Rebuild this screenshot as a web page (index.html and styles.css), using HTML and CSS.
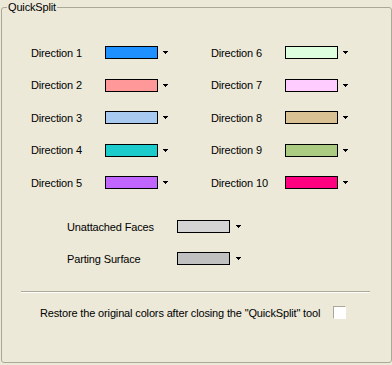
FILE: index.html
```html
<!DOCTYPE html>
<html lang="en">
<head>
    <meta charset="UTF-8">
    <title>QuickSplit</title>
    <link rel="stylesheet" href="styles.css">
</head>
<body>
    <fieldset class="panel">
        <legend>QuickSplit</legend>

        <div class="directions">
            <div class="pick"><span class="pick-label">Direction 1</span><span class="swatch" style="background:#1e90ff"></span><svg class="arrow" width="5" height="3"><rect x="0" y="0" width="5" height="1"/><rect x="1" y="1" width="3" height="1"/><rect x="2" y="2" width="1" height="1"/></svg></div>
            <div class="pick"><span class="pick-label">Direction 2</span><span class="swatch" style="background:#ff9898"></span><svg class="arrow" width="5" height="3"><rect x="0" y="0" width="5" height="1"/><rect x="1" y="1" width="3" height="1"/><rect x="2" y="2" width="1" height="1"/></svg></div>
            <div class="pick"><span class="pick-label">Direction 3</span><span class="swatch" style="background:#a8caf0"></span><svg class="arrow" width="5" height="3"><rect x="0" y="0" width="5" height="1"/><rect x="1" y="1" width="3" height="1"/><rect x="2" y="2" width="1" height="1"/></svg></div>
            <div class="pick"><span class="pick-label">Direction 4</span><span class="swatch" style="background:#1ccccc"></span><svg class="arrow" width="5" height="3"><rect x="0" y="0" width="5" height="1"/><rect x="1" y="1" width="3" height="1"/><rect x="2" y="2" width="1" height="1"/></svg></div>
            <div class="pick"><span class="pick-label">Direction 5</span><span class="swatch" style="background:#c066ff"></span><svg class="arrow" width="5" height="3"><rect x="0" y="0" width="5" height="1"/><rect x="1" y="1" width="3" height="1"/><rect x="2" y="2" width="1" height="1"/></svg></div>
            <div class="pick"><span class="pick-label">Direction 6</span><span class="swatch" style="background:#ddffdd"></span><svg class="arrow" width="5" height="3"><rect x="0" y="0" width="5" height="1"/><rect x="1" y="1" width="3" height="1"/><rect x="2" y="2" width="1" height="1"/></svg></div>
            <div class="pick"><span class="pick-label">Direction 7</span><span class="swatch" style="background:#ffccff"></span><svg class="arrow" width="5" height="3"><rect x="0" y="0" width="5" height="1"/><rect x="1" y="1" width="3" height="1"/><rect x="2" y="2" width="1" height="1"/></svg></div>
            <div class="pick"><span class="pick-label">Direction 8</span><span class="swatch" style="background:#d9c194"></span><svg class="arrow" width="5" height="3"><rect x="0" y="0" width="5" height="1"/><rect x="1" y="1" width="3" height="1"/><rect x="2" y="2" width="1" height="1"/></svg></div>
            <div class="pick"><span class="pick-label">Direction 9</span><span class="swatch" style="background:#aacb80"></span><svg class="arrow" width="5" height="3"><rect x="0" y="0" width="5" height="1"/><rect x="1" y="1" width="3" height="1"/><rect x="2" y="2" width="1" height="1"/></svg></div>
            <div class="pick"><span class="pick-label">Direction 10</span><span class="swatch" style="background:#ff0080"></span><svg class="arrow" width="5" height="3"><rect x="0" y="0" width="5" height="1"/><rect x="1" y="1" width="3" height="1"/><rect x="2" y="2" width="1" height="1"/></svg></div>
        </div>

        <div class="extras">
            <div class="pick"><span class="pick-label">Unattached Faces</span><span class="swatch" style="background:#d4d4d4"></span><svg class="arrow" width="5" height="3"><rect x="0" y="0" width="5" height="1"/><rect x="1" y="1" width="3" height="1"/><rect x="2" y="2" width="1" height="1"/></svg></div>
            <div class="pick"><span class="pick-label">Parting Surface</span><span class="swatch" style="background:#c0c0c0"></span><svg class="arrow" width="5" height="3"><rect x="0" y="0" width="5" height="1"/><rect x="1" y="1" width="3" height="1"/><rect x="2" y="2" width="1" height="1"/></svg></div>
        </div>

        <hr class="separator">

        <label class="restore">
            <span class="restore-text">Restore the original colors after closing the "QuickSplit" tool</span>
            <input type="checkbox" class="check">
        </label>
    </fieldset>
</body>
</html>
```

FILE: styles.css
```css
body {
    margin: 0;
    background: #ece9d8;
    font-family: "Liberation Sans", Arial, sans-serif;
    font-size: 11px;
    letter-spacing: -0.15px;
    color: #000;
}
.panel {
    margin: 0 1px;
    padding: 0;
    height: 363px;
    box-sizing: border-box;
    border: 1px solid #aca899;
    border-radius: 3px;
}
.panel legend {
    margin-left: 5px;
    padding: 0 1px;
    line-height: 14px;
}
.directions {
    display: grid;
    grid-template-rows: repeat(5, 13px);
    grid-auto-flow: column;
    grid-template-columns: 180px 180px;
    row-gap: 19.5px;
    margin-top: 32px;
    padding-left: 29px;
}
.pick {
    display: flex;
    align-items: center;
    height: 13px;
}
.pick-label {
    width: 74px;
    flex-shrink: 0;
    white-space: nowrap;
}
.swatch {
    width: 53px;
    height: 13px;
    box-sizing: border-box;
    border: 1px solid #000;
}
.arrow {
    margin-left: 5px;
    fill: #000;
}
.extras {
    display: grid;
    row-gap: 19px;
    margin-top: 31px;
    padding-left: 65px;
}
.extras .pick-label {
    width: 110px;
}
.extras .arrow {
    margin-left: 6px;
}
.separator {
    margin: 26px 0 0 19px;
    width: 349px;
    height: 0;
    border: none;
    border-top: 1px solid #aca899;
    border-bottom: 1px solid #fff;
}
.restore {
    display: grid;
    grid-template-columns: 293px 13px;
    align-items: center;
    margin-top: 13px;
    padding-left: 38px;
}
.check {
    appearance: none;
    margin: 0;
    width: 13px;
    height: 13px;
    box-sizing: border-box;
    border: 1px solid;
    border-color: #aca899 #fff #fff #aca899;
    background: #fff;
}
```
